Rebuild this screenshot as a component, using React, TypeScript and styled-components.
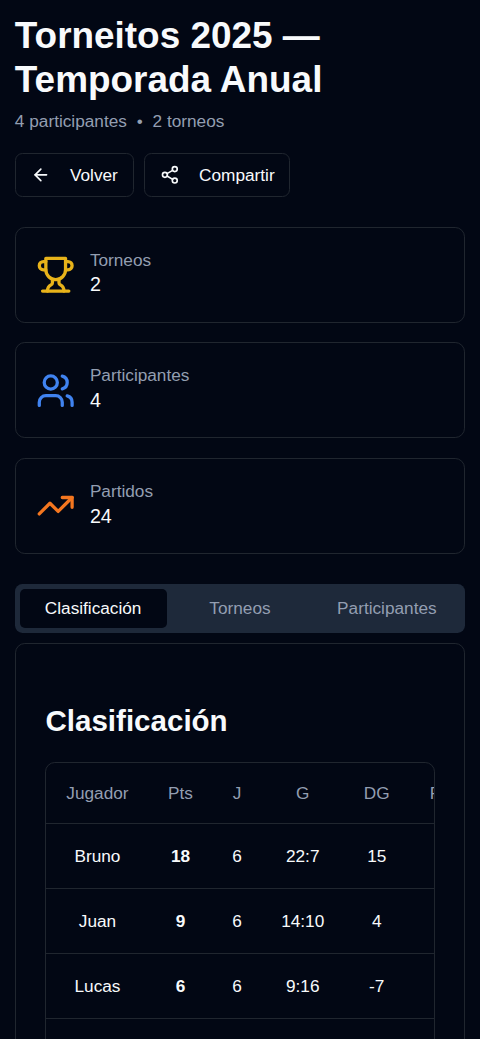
import React from 'react';
import styled, { createGlobalStyle, css } from 'styled-components';
import { ArrowLeft, Share2, TrendingUp } from 'lucide-react';

const colors = {
  background: '#020714',
  foreground: '#f8fafc',
  muted: '#939eb1',
  border: '#20262f',
  surface: '#1e293a',
};

const GlobalStyle = createGlobalStyle`
  *, *::before, *::after { box-sizing: border-box; }
  html, body { margin: 0; background: ${colors.background}; }
  body {
    height: 1039px;
    overflow: hidden;
    color: ${colors.foreground};
    font-family: "Liberation Sans", Arial, sans-serif;
    font-size: 17.23px;
    line-height: 24.6px;
  }
`;

const Page = styled.main`
  display: flex;
  flex-direction: column;
  gap: 29.5px;
  height: 1039px;
  overflow: hidden;
  padding: 14px 14.8px 0;
`;

const Header = styled.header`
  display: flex;
  flex-direction: column;
`;

const Title = styled.h1`
  margin: 0;
  font-size: 36.92px;
  line-height: 44.3px;
  font-weight: 700;
`;

const Subtitle = styled.p`
  margin: 6.4px 0 19.2px;
  color: ${colors.muted};
  white-space: pre;
  word-spacing: 0.1px;
`;

const Actions = styled.div`
  display: flex;
  gap: 10.3px;
`;

const Button = styled.button`
  display: inline-flex;
  align-items: center;
  gap: 19.7px;
  height: 44.3px;
  padding: 1px 14.8px 0;
  border: 1px solid ${colors.border};
  border-radius: 7.4px;
  background: transparent;
  color: inherit;
  font: inherit;

  svg {
    margin-bottom: 1.4px;
  }
`;

const Stats = styled.section`
  display: flex;
  flex-direction: column;
  gap: 19.7px;
`;

const StatCard = styled.article`
  display: flex;
  align-items: center;
  gap: 14.8px;
  height: 96px;
  padding: 0 19.9px;
  border: 1px solid ${colors.border};
  border-radius: 9.85px;
`;

const StatIcon = styled.span<{ $color: string }>`
  display: flex;
  color: ${({ $color }) => $color};
`;

const StatText = styled.div`
  display: flex;
  flex-direction: column;
  padding-bottom: 3.4px;
`;

const StatLabel = styled.div`
  color: ${colors.muted};
`;

const StatValue = styled.div`
  font-size: 19.7px;
  line-height: 25.6px;
`;

const TabSection = styled.section`
  display: flex;
  flex-direction: column;
  gap: 9.85px;
  padding-top: 0.3px;
`;

const TabList = styled.div`
  display: grid;
  grid-template-columns: repeat(3, 1fr);
  height: 49.2px;
  padding: 4.9px;
  border-radius: 7.4px;
  background: ${colors.surface};
`;

const Tab = styled.button<{ $active?: boolean }>`
  padding: 0;
  border: 0;
  border-radius: 5px;
  background: transparent;
  color: ${colors.muted};
  font: inherit;
  ${({ $active }) =>
    $active &&
    css`
      background: ${colors.background};
      color: ${colors.foreground};
    `}
`;

const Panel = styled.div`
  height: 500px;
  padding: 57.7px 29.7px 0;
  border: 1px solid ${colors.border};
  border-radius: 9.85px;
`;

const PanelTitle = styled.h2`
  margin: 0 0 21.5px;
  font-size: 29.54px;
  line-height: 39.4px;
  font-weight: 700;
`;

const TableFrame = styled.div`
  overflow: hidden;
  border: 1px solid ${colors.border};
  border-radius: 9.85px;
`;

const Table = styled.table`
  table-layout: fixed;
  width: 428.5px;
  border-collapse: collapse;
  text-align: center;
`;

const HeadCell = styled.th`
  height: 60px;
  padding: 0;
  border-bottom: 1px solid ${colors.border};
  color: ${colors.muted};
  font-weight: 400;
`;

const Cell = styled.td<{ $strong?: boolean }>`
  height: 65.2px;
  padding: 0;
  border-bottom: 1px solid ${colors.border};
  font-weight: ${({ $strong }) => ($strong ? 700 : 400)};
`;

const Trophy = ({ size }: { size: number }) => (
  <svg
    width={size}
    height={size}
    viewBox="0 0 24 24"
    fill="none"
    stroke="currentColor"
    strokeWidth="2"
    strokeLinecap="round"
    strokeLinejoin="round"
  >
    <path d="M6 9H4.5a2.5 2.5 0 0 1 0-5H6" />
    <path d="M18 9h1.5a2.5 2.5 0 0 0 0-5H18" />
    <path d="M4 22h16" />
    <path d="M10 14.66V17c0 .55-.47.98-.97 1.21C7.85 18.75 7 20.24 7 22" />
    <path d="M14 14.66V17c0 .55.47.98.97 1.21C16.15 18.75 17 20.24 17 22" />
    <path d="M18 2H6v7a6 6 0 0 0 12 0V2Z" />
  </svg>
);

const Users = ({ size }: { size: number }) => (
  <svg
    width={size}
    height={size}
    viewBox="0 0 24 24"
    fill="none"
    stroke="currentColor"
    strokeWidth="2"
    strokeLinecap="round"
    strokeLinejoin="round"
  >
    <path d="M16 21v-2a4 4 0 0 0-4-4H6a4 4 0 0 0-4 4v2" />
    <circle cx="9" cy="7" r="4" />
    <path d="M22 21v-2a4 4 0 0 0-3-3.87" />
    <path d="M16 3.13a4 4 0 0 1 0 7.75" />
  </svg>
);

const stats = [
  { label: 'Torneos', value: 2, color: '#e8b31a', Icon: Trophy },
  { label: 'Participantes', value: 4, color: '#4083f0', Icon: Users },
  { label: 'Partidos', value: 24, color: '#f4761f', Icon: TrendingUp },
];

const columns = [
  { label: 'Jugador', width: 102 },
  { label: 'Pts', width: 64 },
  { label: 'J', width: 49 },
  { label: 'G', width: 82.5 },
  { label: 'DG', width: 65.5 },
  { label: 'PG', width: 65.5 },
];

const rows = [
  ['Bruno', '18', '6', '22:7', '15'],
  ['Juan', '9', '6', '14:10', '4'],
  ['Lucas', '6', '6', '9:16', '-7'],
  ['', '', '', '', ''],
];

export default function App() {
  return (
    <>
      <GlobalStyle />
      <Page>
        <Header>
          <Title>
            Torneitos 2025 —<br />
            Temporada Anual
          </Title>
          <Subtitle>{'4 participantes \u00a0•\u00a0 2 torneos'}</Subtitle>
          <Actions>
            <Button>
              <ArrowLeft size={19.7} />
              Volver
            </Button>
            <Button>
              <Share2 size={19.7} />
              Compartir
            </Button>
          </Actions>
        </Header>
        <Stats>
          {stats.map(({ label, value, color, Icon }) => (
            <StatCard key={label}>
              <StatIcon $color={color}>
                <Icon size={39.4} />
              </StatIcon>
              <StatText>
                <StatLabel>{label}</StatLabel>
                <StatValue>{value}</StatValue>
              </StatText>
            </StatCard>
          ))}
        </Stats>
        <TabSection>
          <TabList>
            <Tab $active>Clasificación</Tab>
            <Tab>Torneos</Tab>
            <Tab>Participantes</Tab>
          </TabList>
          <Panel>
            <PanelTitle>Clasificación</PanelTitle>
            <TableFrame>
              <Table>
                <colgroup>
                  {columns.map((c) => (
                    <col key={c.label} style={{ width: c.width }} />
                  ))}
                </colgroup>
                <thead>
                  <tr>
                    {columns.map((c) => (
                      <HeadCell key={c.label}>{c.label}</HeadCell>
                    ))}
                  </tr>
                </thead>
                <tbody>
                  {rows.map((row, r) => (
                    <tr key={r}>
                      {row.map((value, i) => (
                        <Cell key={i} $strong={i === 1}>
                          {value}
                        </Cell>
                      ))}
                      <Cell />
                    </tr>
                  ))}
                </tbody>
              </Table>
            </TableFrame>
          </Panel>
        </TabSection>
      </Page>
    </>
  );
}
